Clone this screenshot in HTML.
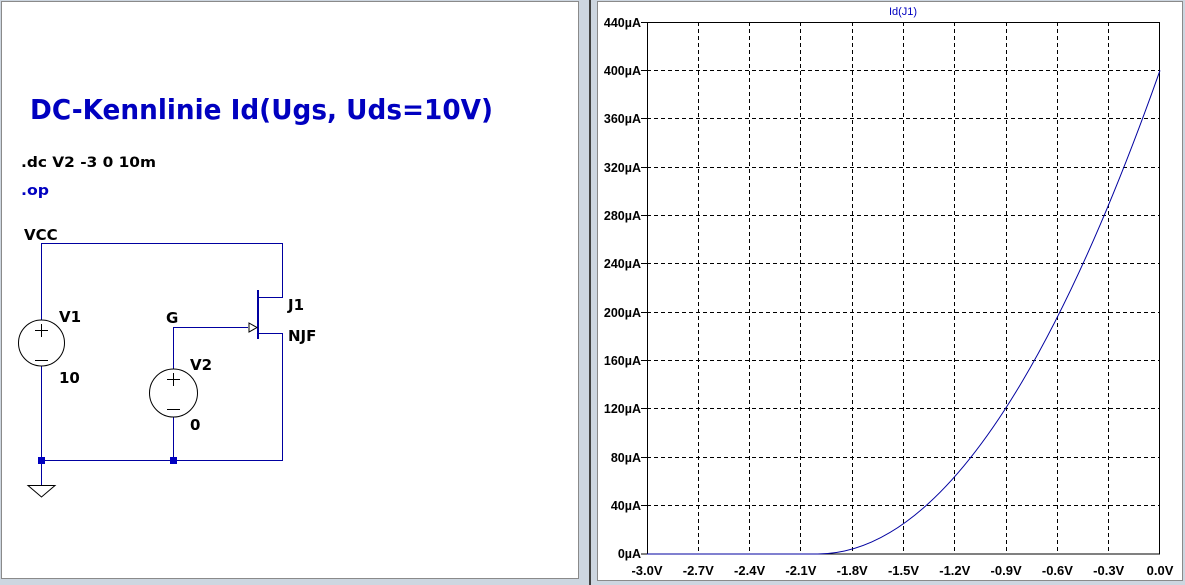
<!DOCTYPE html>
<html><head><meta charset="utf-8"><style>
html,body{margin:0;padding:0;width:1185px;height:585px;overflow:hidden;background:#cdd6e0}
svg{display:block}
.b{font-family:"DejaVu Sans","Liberation Sans",sans-serif;font-weight:bold}
.l{font-family:"Liberation Sans",sans-serif;font-weight:bold}
</style></head><body>
<svg width="1185" height="585" viewBox="0 0 1185 585" xmlns="http://www.w3.org/2000/svg">
<rect x="0" y="0" width="1185" height="585" fill="#cdd6e0"/>
<rect x="1.5" y="1.5" width="577" height="577" fill="#fff" stroke="#8a8a8a"/>
<line x1="590" y1="0" x2="590" y2="585" stroke="#404040" stroke-width="2"/>
<rect x="597.5" y="1.5" width="585" height="579" fill="#fff" stroke="#8a8a8a"/>

<text class="b" x="30" y="119" font-size="28" fill="#0000c0" textLength="463" lengthAdjust="spacingAndGlyphs">DC-Kennlinie Id(Ugs, Uds=10V)</text>
<text class="b" x="21" y="167" font-size="14" fill="#000" textLength="135" lengthAdjust="spacingAndGlyphs">.dc V2 -3 0 10m</text>
<text class="b" x="21" y="195" font-size="14" fill="#0000c0" textLength="28" lengthAdjust="spacingAndGlyphs">.op</text>

<g stroke="#0000a0" stroke-width="1" fill="none">
<polyline points="41.5,320 41.5,243.5 282.5,243.5 282.5,297.5 258,297.5"/>
<line x1="258" y1="290" x2="258" y2="339" stroke-width="2"/>
<polyline points="258,333.5 282.5,333.5 282.5,460.5 41.5,460.5 41.5,366"/>
<line x1="41.5" y1="460" x2="41.5" y2="485"/>
<polyline points="173.5,369 173.5,327.5 248,327.5"/>
<line x1="173.5" y1="417" x2="173.5" y2="460"/>
</g>
<g stroke="#000" stroke-width="1" fill="none">
<circle cx="41.5" cy="343" r="23"/>
<line x1="35" y1="330.5" x2="48" y2="330.5"/><line x1="41.5" y1="324" x2="41.5" y2="337"/>
<line x1="35" y1="360.5" x2="48" y2="360.5"/>
<circle cx="173.5" cy="393" r="24"/>
<line x1="167" y1="379.5" x2="180" y2="379.5"/><line x1="173.5" y1="373" x2="173.5" y2="386"/>
<line x1="167" y1="409.5" x2="180" y2="409.5"/>
<polygon points="28,485.5 55,485.5 41.5,497"/>
<polygon points="249,323 257,327.5 249,332"/>
</g>
<rect x="38" y="457" width="7" height="7" fill="#0000c0"/>
<rect x="170" y="457" width="7" height="7" fill="#0000c0"/>
<g class="b" font-size="15" fill="#000">
<text x="24" y="240">VCC</text>
<text x="59" y="322">V1</text>
<text x="59" y="383">10</text>
<text x="166" y="323">G</text>
<text x="190" y="370">V2</text>
<text x="190" y="430">0</text>
<text x="288" y="310">J1</text>
<text x="288" y="341">NJF</text>
</g>

<g stroke="#000" stroke-width="1" stroke-dasharray="4,3">
<line x1="698.5" y1="22" x2="698.5" y2="554"/><line x1="749.5" y1="22" x2="749.5" y2="554"/>
<line x1="800.5" y1="22" x2="800.5" y2="554"/><line x1="852.5" y1="22" x2="852.5" y2="554"/>
<line x1="903.5" y1="22" x2="903.5" y2="554"/><line x1="954.5" y1="22" x2="954.5" y2="554"/>
<line x1="1006.5" y1="22" x2="1006.5" y2="554"/><line x1="1057.5" y1="22" x2="1057.5" y2="554"/>
<line x1="1108.5" y1="22" x2="1108.5" y2="554"/>
<line x1="647" y1="70.5" x2="1160" y2="70.5"/><line x1="647" y1="118.5" x2="1160" y2="118.5"/>
<line x1="647" y1="167.5" x2="1160" y2="167.5"/><line x1="647" y1="215.5" x2="1160" y2="215.5"/>
<line x1="647" y1="263.5" x2="1160" y2="263.5"/><line x1="647" y1="312.5" x2="1160" y2="312.5"/>
<line x1="647" y1="360.5" x2="1160" y2="360.5"/><line x1="647" y1="408.5" x2="1160" y2="408.5"/>
<line x1="647" y1="457.5" x2="1160" y2="457.5"/><line x1="647" y1="505.5" x2="1160" y2="505.5"/>
</g>
<rect x="647.5" y="22.5" width="512" height="531.5" fill="none" stroke="#000"/>
<g stroke="#000">
<line x1="641" y1="22.5" x2="647" y2="22.5"/><line x1="641" y1="70.5" x2="647" y2="70.5"/>
<line x1="641" y1="118.5" x2="647" y2="118.5"/><line x1="641" y1="167.5" x2="647" y2="167.5"/>
<line x1="641" y1="215.5" x2="647" y2="215.5"/><line x1="641" y1="263.5" x2="647" y2="263.5"/>
<line x1="641" y1="312.5" x2="647" y2="312.5"/><line x1="641" y1="360.5" x2="647" y2="360.5"/>
<line x1="641" y1="408.5" x2="647" y2="408.5"/><line x1="641" y1="457.5" x2="647" y2="457.5"/>
<line x1="641" y1="505.5" x2="647" y2="505.5"/><line x1="641" y1="554" x2="647" y2="554"/>
</g>
<path d="M647,554 L817.8,554 Q989,554 1160,70.4" fill="none" stroke="#0000a0" stroke-width="1"/>
<g class="l" font-size="12.5" fill="#000" text-anchor="end">
<text x="641" y="27">440µA</text><text x="641" y="75">400µA</text>
<text x="641" y="123">360µA</text><text x="641" y="172">320µA</text>
<text x="641" y="220">280µA</text><text x="641" y="268">240µA</text>
<text x="641" y="317">200µA</text><text x="641" y="365">160µA</text>
<text x="641" y="413">120µA</text><text x="641" y="462">80µA</text>
<text x="641" y="510">40µA</text><text x="641" y="558">0µA</text>
</g>
<g class="l" font-size="13" fill="#000" text-anchor="middle">
<text x="647" y="575">-3.0V</text><text x="698.3" y="575">-2.7V</text>
<text x="749.6" y="575">-2.4V</text><text x="800.9" y="575">-2.1V</text>
<text x="852.2" y="575">-1.8V</text><text x="903.5" y="575">-1.5V</text>
<text x="954.8" y="575">-1.2V</text><text x="1006.1" y="575">-0.9V</text>
<text x="1057.4" y="575">-0.6V</text><text x="1108.7" y="575">-0.3V</text>
<text x="1160" y="575">0.0V</text>
</g>
<text x="903" y="15" font-family="Liberation Sans,sans-serif" font-size="11" fill="#0000c0" text-anchor="middle">Id(J1)</text>
</svg>
</body></html>
